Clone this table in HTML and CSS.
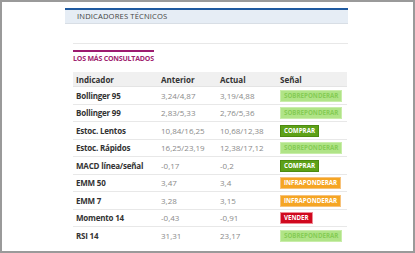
FILE: index.html
```html
<!DOCTYPE html>
<html lang="es">
<head>
<meta charset="utf-8">
<link rel="stylesheet" href="styles.css">
</head>
<body>
<div class="frame">
  <div class="panel">
    <div class="bar">INDICADORES TÉCNICOS</div>
    <div class="inner">
      <div class="tabline"><span class="tab">LOS MÁS CONSULTADOS</span></div>
      <div class="ind">
        <div class="row head"><span>Indicador</span><span>Anterior</span><span>Actual</span><span>Señal</span></div>
        <div class="row"><span class="name">Bollinger 95</span><span>3,24/4,87</span><span>3,19/4,88</span><span><span class="b sob">SOBREPONDERAR</span></span></div>
        <div class="row"><span class="name">Bollinger 99</span><span>2,83/5,33</span><span>2,76/5,36</span><span><span class="b sob">SOBREPONDERAR</span></span></div>
        <div class="row"><span class="name">Estoc. Lentos</span><span>10,84/16,25</span><span>10,68/12,38</span><span><span class="b com">COMPRAR</span></span></div>
        <div class="row"><span class="name">Estoc. Rápidos</span><span>16,25/23,19</span><span>12,38/17,12</span><span><span class="b sob">SOBREPONDERAR</span></span></div>
        <div class="row"><span class="name">MACD línea/señal</span><span>-0,17</span><span>-0,2</span><span><span class="b com">COMPRAR</span></span></div>
        <div class="row"><span class="name">EMM 50</span><span>3,47</span><span>3,4</span><span><span class="b inf">INFRAPONDERAR</span></span></div>
        <div class="row"><span class="name">EMM 7</span><span>3,28</span><span>3,15</span><span><span class="b inf">INFRAPONDERAR</span></span></div>
        <div class="row"><span class="name">Momento 14</span><span>-0,43</span><span>-0,91</span><span><span class="b ven">VENDER</span></span></div>
        <div class="row last"><span class="name">RSI 14</span><span>31,31</span><span>23,17</span><span><span class="b sob">SOBREPONDERAR</span></span></div>
      </div>
    </div>
  </div>
</div>
</body>
</html>
```
FILE: styles.css
```css
html, body {
  margin: 0;
  padding: 0;
  background: #fff;
}
.frame {
  box-sizing: border-box;
  width: 415px;
  height: 253px;
  border: 2px solid #9a9a9a;
  padding: 6px 0 0 63px;
  font-family: "Open Sans", "Liberation Sans", sans-serif;
  overflow: hidden;
}
.panel {
  width: 283px;
}
.bar {
  border-top: 2px solid #1f5aa0;
  background: #e6edf5;
  border-bottom: 1px solid #d8dee5;
  height: 13px;
  line-height: 13px;
  padding-left: 12px;
  font-size: 7.6px;
  letter-spacing: 0.15px;
  color: #444;
}
.inner {
  padding: 19px 0 0 8px;
}
.tabline {
  border-top: 1px solid #e8e8e8;
  height: 22px;
}
.tab {
  display: inline-block;
  border-top: 2px solid #9c1b6f;
  margin-top: -1px;
  padding-top: 2px;
  font-size: 7px;
  font-weight: 700;
  color: #a0246f;
  letter-spacing: -0.2px;
  line-height: 9px;
}
.ind {
  width: 274px;
  margin-top: 6px;
  font-size: 8px;
}
.row {
  display: grid;
  grid-template-columns: 85px 59px 60px 1fr;
  align-items: center;
  height: 16.5px;
  border-bottom: 1px solid #e8e8e8;
  color: #8a8a8a;
  white-space: nowrap;
}
.row > span {
  padding-left: 3px;
}
.row.head {
  background: #f0f0f0;
  height: 14px;
  font-weight: 700;
  color: #333;
  border-bottom-color: #e4e4e4;
}
.row.last { border-bottom: 0; }
.name {
  color: #333;
  font-weight: 700;
  letter-spacing: -0.2px;
}
.b {
  display: inline-block;
  font-size: 6.2px;
  font-weight: 700;
  color: #fff;
  padding: 0 3px;
  height: 10px;
  line-height: 10px;
  vertical-align: middle;
  border: 1px solid transparent;
}
.sob { background: #b0e487; color: #86cc55; border-color: #c8eda9; }
.com { background: #5da117; border-color: #4d8a10; }
.inf { background: #f5a524; border-color: #f7c27a; }
.ven { background: #d0081e; border-color: #ee8a95; }
```
